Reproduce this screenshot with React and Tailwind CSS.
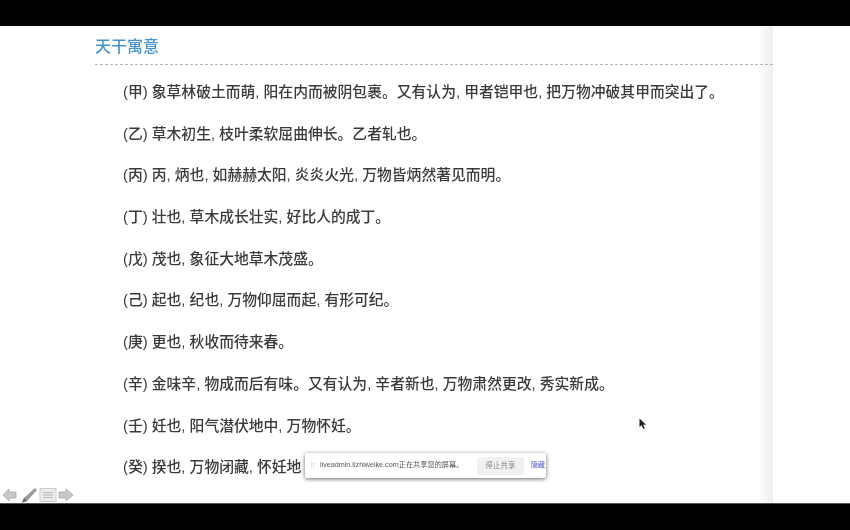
import React from 'react';

const rows = [
    '(甲) 象草林破土而萌, 阳在内而被阴包裹。又有认为, 甲者铠甲也, 把万物冲破其甲而突出了。',
    '(乙) 草木初生, 枝叶柔软屈曲伸长。乙者轧也。',
    '(丙) 丙, 炳也, 如赫赫太阳, 炎炎火光, 万物皆炳然著见而明。',
    '(丁) 壮也, 草木成长壮实, 好比人的成丁。',
    '(戊) 茂也, 象征大地草木茂盛。',
    '(己) 起也, 纪也, 万物仰屈而起, 有形可纪。',
    '(庚) 更也, 秋收而待来春。',
    '(辛) 金味辛, 物成而后有味。又有认为, 辛者新也, 万物肃然更改, 秀实新成。',
    '(壬) 妊也, 阳气潜伏地中, 万物怀妊。',
    '(癸) 揆也, 万物闭藏, 怀妊地',
];

const Toolbar = () => (
    <svg width="74" height="16" viewBox="0 0 74 16" className="absolute left-[2px] top-[487px] blur-[0.5px]">
        <path d="M1 8 L7 2 V5 H14 V11 H7 V14 Z" fill="#c8c8c8" stroke="#a8a8a8" strokeWidth="0.8" />
        <path d="M20 15.5 L22 11 L33 1 L35 3 L25 14 Z" fill="#9a9a9a" />
        <path d="M20 15.5 L22 11 L25 14 Z" fill="#666666" />
        <rect x="38" y="1.5" width="16" height="13" fill="#ececec" stroke="#cccccc" />
        <path d="M41 5.5 H51 M41 8 H51 M41 10.5 H51" stroke="#b4b4b4" strokeWidth="1" />
        <path d="M71 8 L64 2 V5 H57 V11 H64 V14 Z" fill="#c8c8c8" stroke="#a8a8a8" strokeWidth="0.8" />
    </svg>
);

const App = () => {
    return (
        <div className="relative w-[850px] h-[530px] flex flex-col overflow-hidden bg-black font-['Liberation_Sans','Noto_Sans_CJK_SC',sans-serif]">
            <div className="h-[26px] shrink-0 bg-black"></div>
            <div className="h-[477px] shrink-0 flex bg-white">
                <div className="w-[773px] shrink-0 bg-gradient-to-r from-white from-[98%] to-[#eeeeee] pl-[95px]">
                    <h1 className="h-[38px] pt-[10px] text-[16px] font-medium leading-[22px] text-[#4a94c8] blur-[0.3px]">天干寓意</h1>
                    <div className="border-t border-dashed border-[#a9bdbd]"></div>
                    <div className="pl-[28px] pt-[16px] flex flex-col gap-[19.7px] blur-[0.3px]">
                        {rows.map((row) => (
                            <p key={row} className="h-[22px] text-[14.8px] font-medium leading-[22px] text-[#3a3a3a] whitespace-nowrap">{row}</p>
                        ))}
                    </div>
                </div>
            </div>
            <div className="h-[27px] shrink-0 bg-black border-t border-[#555555]"></div>

            <Toolbar />

            {/* screen share notice */}
            <div className="absolute left-[305px] top-[453px] w-[241px] h-[25px] flex items-center bg-white rounded-[2px] shadow-[0_1px_4px_rgba(0,0,0,0.6)] pl-[5px] blur-[0.3px]">
                <span className="w-[9px] text-[7px] leading-none text-[#cccccc]">⠿</span>
                <span className="ml-[1px] w-[152px] shrink-0 text-[7.2px] text-[#555555] whitespace-nowrap">liveadmin.lizhiweike.com正在共享您的屏幕。</span>
                <span className="ml-[5px] w-[47px] h-[18px] shrink-0 flex items-center justify-center bg-[#f1f1f1] text-[7.5px] text-[#888888] whitespace-nowrap">停止共享</span>
                <span className="ml-[7px] shrink-0 text-[7px] text-[#4a55c8] whitespace-nowrap">隐藏</span>
            </div>

            {/* mouse cursor */}
            <svg width="8" height="12" viewBox="0 0 8 12" className="absolute left-[639px] top-[418px]">
                <path d="M0.5 0.5 V9 L2.6 7.2 L4.2 11 L5.8 10.3 L4.2 6.8 H7 Z" fill="#222222" />
            </svg>
        </div>
    );
};

export default App;
